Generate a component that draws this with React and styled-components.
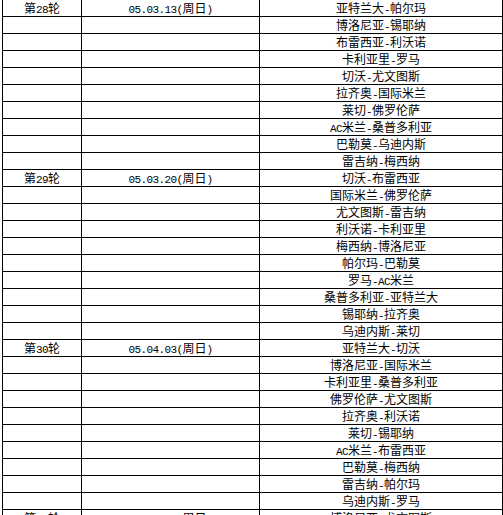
import React from "react";
import styled, { createGlobalStyle } from "styled-components";

const Global = createGlobalStyle`
  html, body {
    margin: 0;
    padding: 0;
    background: #ffffff;
  }
  body {
    font-family: "Noto Sans CJK SC", "Liberation Sans", sans-serif;
    color: #000000;
  }
`;

const Page = styled.div`
  padding-left: 2px;
  margin-top: -1px;
  overflow: hidden;
  height: 516px;
`;

const Table = styled.table`
  border-collapse: collapse;
  table-layout: fixed;
  width: 500px;
`;

const Cell = styled.td`
  border: 1px solid #000000;
  padding: 0;
  color: #000000;
`;

const Inner = styled.div`
  display: flex;
  justify-content: center;
  align-items: baseline;
  height: 16px;
  overflow: hidden;
  white-space: nowrap;
`;

const Cjk = styled.span`
  font-family: "Noto Sans CJK SC", sans-serif;
  font-size: 12px;
  line-height: 16px;
`;

const Ascii = styled.span`
  font-family: "Liberation Mono", monospace;
  font-size: 11px;
  letter-spacing: -0.6px;
  line-height: 16px;
`;

// SimSun style: ascii is half width, CJK full width
const Txt = ({ children }) => {
  if (!children) return null;
  const parts = children.split(/([\x20-\x7e]+)/).filter(Boolean);
  return parts.map((p, i) =>
    /^[\x20-\x7e]+$/.test(p) ? <Ascii key={i}>{p}</Ascii> : <Cjk key={i}>{p}</Cjk>
  );
};

const rounds = [
  {
    round: "第28轮",
    date: "05.03.13(周日)",
    matches: [
      "亚特兰大-帕尔玛",
      "博洛尼亚-锡耶纳",
      "布雷西亚-利沃诺",
      "卡利亚里-罗马",
      "切沃-尤文图斯",
      "拉齐奥-国际米兰",
      "莱切-佛罗伦萨",
      "AC米兰-桑普多利亚",
      "巴勒莫-乌迪内斯",
      "雷吉纳-梅西纳",
    ],
  },
  {
    round: "第29轮",
    date: "05.03.20(周日)",
    matches: [
      "切沃-布雷西亚",
      "国际米兰-佛罗伦萨",
      "尤文图斯-雷吉纳",
      "利沃诺-卡利亚里",
      "梅西纳-博洛尼亚",
      "帕尔玛-巴勒莫",
      "罗马-AC米兰",
      "桑普多利亚-亚特兰大",
      "锡耶纳-拉齐奥",
      "乌迪内斯-莱切",
    ],
  },
  {
    round: "第30轮",
    date: "05.04.03(周日)",
    matches: [
      "亚特兰大-切沃",
      "博洛尼亚-国际米兰",
      "卡利亚里-桑普多利亚",
      "佛罗伦萨-尤文图斯",
      "拉齐奥-利沃诺",
      "莱切-锡耶纳",
      "AC米兰-布雷西亚",
      "巴勒莫-梅西纳",
      "雷吉纳-帕尔玛",
      "乌迪内斯-罗马",
    ],
  },
  {
    round: "第31轮",
    date: "05.04.10(周日)",
    matches: ["博洛尼亚-尤文图斯"],
  },
];

const App = () => {
  return (
    <Page>
      <Global />
      <Table>
        <colgroup>
          <col style={{ width: 79 }} />
          <col style={{ width: 178 }} />
          <col style={{ width: 243 }} />
        </colgroup>
        <tbody>
          {rounds.map((r) =>
            r.matches.map((m, i) => (
              <tr key={r.round + i}>
                <Cell>
                  <Inner>{i === 0 && <Txt>{r.round}</Txt>}</Inner>
                </Cell>
                <Cell>
                  <Inner>{i === 0 && <Txt>{r.date}</Txt>}</Inner>
                </Cell>
                <Cell>
                  <Inner>
                    <Txt>{m}</Txt>
                  </Inner>
                </Cell>
              </tr>
            ))
          )}
        </tbody>
      </Table>
    </Page>
  );
};

export default App;
